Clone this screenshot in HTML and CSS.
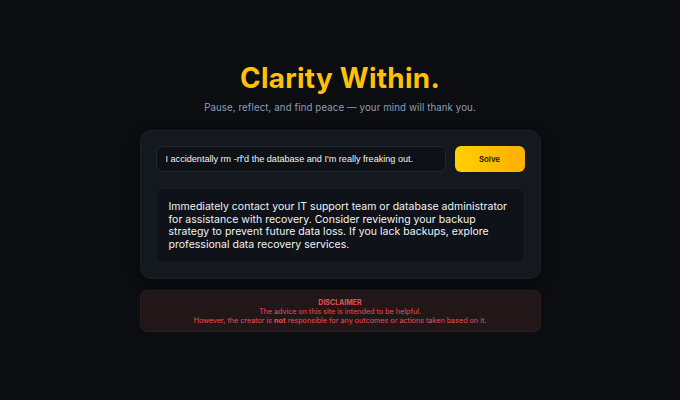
FILE: index.html
```html
<!DOCTYPE html>
<html lang="en">
<head>
<meta charset="utf-8">
<title>Clarity Within.</title>
<link rel="stylesheet" href="styles.css">
</head>
<body>
<main class="page">
  <header class="hero">
    <h1 class="title">Clarity Within.</h1>
    <p class="subtitle">Pause, reflect, and find peace — your mind will thank you.</p>
  </header>
  <section class="card">
    <form class="ask">
      <input class="ask-input" type="text" value="I accidentally rm -rf'd the database and I'm really freaking out.">
      <button class="ask-btn" type="button">Solve</button>
    </form>
    <div class="answer">
      <p>Immediately contact your IT support team or database administrator for assistance with recovery. Consider reviewing your backup strategy to prevent future data loss. If you lack backups, explore professional data recovery services.</p>
    </div>
  </section>
  <aside class="disclaimer">
    <div class="disc-title">DISCLAIMER</div>
    <div>The advice on this site is intended to be helpful.</div>
    <div>However, the creator is <strong>not</strong> responsible for any outcomes or actions taken based on it.</div>
  </aside>
</main>
</body>
</html>
```

FILE: styles.css
```css
* { box-sizing: border-box; }
html, body { margin: 0; padding: 0; }
body {
  background: #0b0d11;
  font-family: Inter, "Noto Sans", sans-serif;
  width: 680px;
  height: 400px;
  overflow: hidden;
}
.page {
  width: 401px;
  margin: 0 auto;
  padding-top: 62px;
  display: flex;
  flex-direction: column;
}
.hero { text-align: center; }
.title {
  margin: 0;
  font-size: 27.8px;
  line-height: 32px;
  font-weight: 700;
  letter-spacing: 0.3px;
  color: #ffc107;
}
.subtitle {
  margin: 7px 0 0;
  font-size: 9.7px;
  line-height: 14px;
  letter-spacing: 0.1px;
  color: #8f9db5;
}
.card {
  margin-top: 15px;
  background: #14181f;
  border: 1px solid #1b2029;
  border-radius: 11px;
  padding: 15px;
  box-shadow: 0 4px 14px rgba(0,0,0,0.4);
}
.ask {
  display: flex;
  gap: 9px;
  margin: 0;
}
.ask-input {
  flex: 1;
  height: 26px;
  background: #0e1116;
  border: 1px solid #222831;
  border-radius: 6px;
  color: #f1f3f5;
  font-family: "Liberation Sans", Arial, sans-serif;
  font-size: 9.1px;
  padding: 0 9px;
  outline: none;
}
.ask-btn {
  width: 70px;
  height: 26px;
  border: none;
  border-radius: 6px;
  background: linear-gradient(90deg, #ffd000, #ffae00);
  color: #1a1400;
  font-family: Inter, sans-serif;
  font-weight: 600;
  font-size: 7.8px;
  cursor: pointer;
}
.answer {
  margin-top: 16px;
  background: #0f1218;
  border: 1px solid #181d25;
  border-radius: 7px;
  padding: 12px 14px 11px 12px;
}
.answer p {
  margin: 0;
  color: #f1f3f5;
  font-size: 10.5px;
  line-height: 12.6px;
  letter-spacing: 0.02px;
}
.disclaimer {
  margin-top: 11px;
  background: #211718;
  border: 1px solid #2a1d1f;
  border-radius: 7px;
  padding: 8px 10px 6px;
  text-align: center;
  color: #ea4d52;
  font-family: Inter, sans-serif;
  font-size: 7.2px;
  line-height: 8.6px;
}
.disc-title {
  font-weight: 700;
  font-size: 7px;
}
.disclaimer strong { font-weight: 700; }
```
